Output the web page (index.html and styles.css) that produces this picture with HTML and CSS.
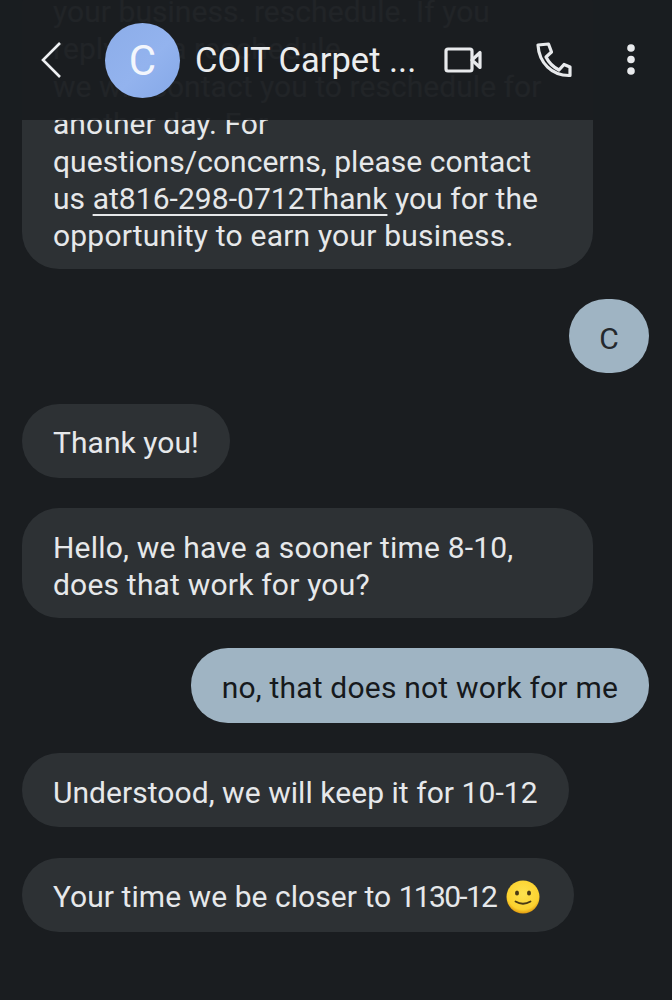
FILE: index.html
```html
<!DOCTYPE html>
<html lang="en">
<head>
<meta charset="utf-8">
<title>COIT Carpet</title>
<link rel="stylesheet" href="styles.css">
</head>
<body>
<div class="screen">
  <header class="topbar">
    <svg class="back" viewBox="0 0 24 40" width="24" height="40"><path d="M20 3 L3 20 L20 37"/></svg>
    <div class="avatar">C</div>
    <div class="name">COIT Carpet ...</div>
    <svg class="ico video" viewBox="0 0 38 28" width="38" height="28"><rect x="2" y="3" width="26" height="22" rx="2"/><path d="M28 14 L36 6.500 V21.500 Z"/></svg>
    <svg class="ico phone" viewBox="0 0 36 36" width="36" height="36"><path d="M2 3 L12.500 2 L15.500 10 L10 15 C13 21 17 25 23 28 L28 22.500 L34 25 V33.500 C16 34 3 21 2 3 Z"/></svg>
    <svg class="dots" viewBox="0 0 8 32" width="8" height="32"><circle cx="4" cy="4" r="3.800"/><circle cx="4" cy="15.500" r="3.800"/><circle cx="4" cy="27" r="3.800"/></svg>
  </header>
  <main class="thread">
    <div class="bubble in wide first">your business. reschedule. If you<br>reply for a reschedule<br>we will contact you to reschedule for<br>another day. For<br>questions/concerns, please contact<br>us <u>at816-298-0712Thank</u> you for the<br><span class="loose">opportunity to earn your business.</span></div>
    <div class="bubble out small">C</div>
    <div class="bubble in">Thank you!</div>
    <div class="bubble in wide loose">Hello, we have a sooner time 8-10,<br>does that work for you?</div>
    <div class="bubble out loose">no, that does not work for me</div>
    <div class="bubble in">Understood, we will keep it for 10-12</div>
    <div class="bubble in">Your time we be closer to <span class="tight">1130-12</span><svg class="emoji" viewBox="0 0 34 34" width="34" height="34"><defs><radialGradient id="face" cx="50%" cy="40%" r="60%"><stop offset="0" stop-color="#fde24f"/><stop offset="0.8" stop-color="#fcd22f"/><stop offset="1" stop-color="#e0990f"/></radialGradient></defs><circle cx="17" cy="17" r="16.500" fill="url(#face)"/><ellipse cx="11" cy="13" rx="2" ry="2.500" fill="#4a3a14"/><ellipse cx="23" cy="13" rx="2" ry="2.500" fill="#4a3a14"/><path d="M9.500 21.500 Q17 26 24.500 21.500" fill="none" stroke="#4a3a14" stroke-width="1.800" stroke-linecap="round"/></svg></div>
  </main>
</div>
</body>
</html>
```

FILE: styles.css
```css
* { box-sizing: border-box; }
html, body { margin: 0; padding: 0; background: #1a1d20; }
body { font-family: "Roboto", "Liberation Sans", sans-serif; color: #e6e8ea; }
.screen { position: relative; width: 672px; height: 1000px; overflow: hidden; background: #1a1d20; }
.topbar {
  position: absolute; top: 0; left: 0; right: 0; height: 120px;
  display: flex; align-items: center;
  background: rgba(26, 29, 32, 0.97);
  padding: 0 0 0 40px;
  z-index: 2;
}
.back { fill: none; stroke: #eef0f2; stroke-width: 2.600; flex: none; margin-right: 41px; }
.avatar {
  flex: none; width: 75px; height: 75px; border-radius: 50%;
  background: linear-gradient(135deg, #8cade9 0%, #93b3ee 55%, #85a8e8 100%); color: #f3f6fc;
  display: flex; align-items: center; justify-content: center;
  font-size: 42px; font-weight: 400;
  margin-right: 15px;
}
.name { flex: none; width: 249px; font-size: 34.500px; color: #ebedef; white-space: nowrap; }
.ico { flex: none; fill: none; stroke: #e8eaec; stroke-width: 3.200; stroke-linejoin: round; }
.video { margin-right: 54px; }
.phone { margin-right: 55px; }
.dots { flex: none; fill: #e8eaec; }
.thread {
  display: flex; flex-direction: column; gap: 30.300px;
  padding: 0 23px 0 22px;
  font-size: 30px; line-height: 37.400px; letter-spacing: 0.050px;
}
.bubble { align-self: flex-start; background: #2d3134; border-radius: 37px; padding: 20.500px 31px 14.500px; min-height: 74.300px; }
.bubble u { text-underline-offset: 5px; text-decoration-thickness: 2px; }
.in.wide { width: 571px; }
.first { margin-top: -27.600px; padding: 20.600px 31px 14px; }
.out { align-self: flex-end; background: #9fb4c3; color: #16191c; }
.out.small { padding: 21px 0 0; width: 80px; text-align: center; color: #24292d; font-size: 30px; }
.loose { letter-spacing: 0.200px; }
.tight { letter-spacing: -1.700px; }
.emoji { vertical-align: -7px; margin: 0 3px 0 10px; }
```
